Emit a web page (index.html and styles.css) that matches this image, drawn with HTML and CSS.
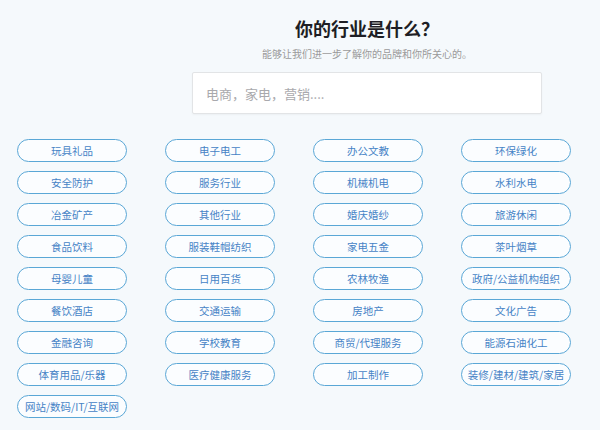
FILE: index.html
```html
<!DOCTYPE html>
<html lang="zh-CN">
<head>
<meta charset="utf-8">
<title>你的行业是什么？</title>
<link rel="stylesheet" href="styles.css">
</head>
<body>
<div class="page">
  <div class="header">
    <h1 class="title">你的行业是什么？</h1>
    <p class="subtitle">能够让我们进一步了解你的品牌和你所关心的。</p>
    <input class="search" type="text" placeholder="电商，家电，营销....">
  </div>
  <div class="tags">
    <span class="tag">玩具礼品</span>
    <span class="tag">电子电工</span>
    <span class="tag">办公文教</span>
    <span class="tag">环保绿化</span>
    <span class="tag">安全防护</span>
    <span class="tag">服务行业</span>
    <span class="tag">机械机电</span>
    <span class="tag">水利水电</span>
    <span class="tag">冶金矿产</span>
    <span class="tag">其他行业</span>
    <span class="tag">婚庆婚纱</span>
    <span class="tag">旅游休闲</span>
    <span class="tag">食品饮料</span>
    <span class="tag">服装鞋帽纺织</span>
    <span class="tag">家电五金</span>
    <span class="tag">茶叶烟草</span>
    <span class="tag">母婴儿童</span>
    <span class="tag">日用百货</span>
    <span class="tag">农林牧渔</span>
    <span class="tag">政府/公益机构组织</span>
    <span class="tag">餐饮酒店</span>
    <span class="tag">交通运输</span>
    <span class="tag">房地产</span>
    <span class="tag">文化广告</span>
    <span class="tag">金融咨询</span>
    <span class="tag">学校教育</span>
    <span class="tag">商贸/代理服务</span>
    <span class="tag">能源石油化工</span>
    <span class="tag">体育用品/乐器</span>
    <span class="tag">医疗健康服务</span>
    <span class="tag">加工制作</span>
    <span class="tag">装修/建材/建筑/家居</span>
    <span class="tag">网站/数码/IT/互联网</span>
  </div>
</div>
</body>
</html>
```
FILE: styles.css
```css
html, body {
  margin: 0;
  padding: 0;
  background: #f5f9fc;
  font-family: "Noto Sans CJK SC", "Noto Sans", sans-serif;
}
.page {
  width: 600px;
  height: 430px;
  overflow: hidden;
}
.header {
  width: 350px;
  margin-left: 192px;
  padding-top: 16px;
  text-align: center;
}
.title {
  margin: 0;
  font-size: 18px;
  line-height: 24px;
  font-weight: 700;
  color: #1e1e24;
}
.subtitle {
  margin: 7px 0 0;
  font-size: 10px;
  line-height: 14px;
  color: #9a9a9a;
}
.search {
  display: block;
  box-sizing: border-box;
  margin: 11px 0 0;
  width: 350px;
  height: 42px;
  padding: 0 13px;
  border: 1px solid #e2e4e6;
  border-radius: 2px;
  background: #ffffff;
  font-family: inherit;
  font-size: 13px;
  color: #555;
  box-shadow: 0 1px 2px rgba(0,0,0,0.04);
  outline: none;
}
.search::placeholder {
  color: #a9a9ad;
}
.tags {
  margin: 25px 0 0 17px;
  display: grid;
  grid-template-columns: repeat(4, 110px);
  column-gap: 38px;
  row-gap: 9px;
}
.tag {
  box-sizing: border-box;
  height: 23px;
  border: 1px solid #5aa7d6;
  border-radius: 12px;
  background: #fbfdff;
  color: #4683c6;
  font-size: 10.5px;
  line-height: 21px;
  text-align: center;
  white-space: nowrap;
  overflow: hidden;
}
```
